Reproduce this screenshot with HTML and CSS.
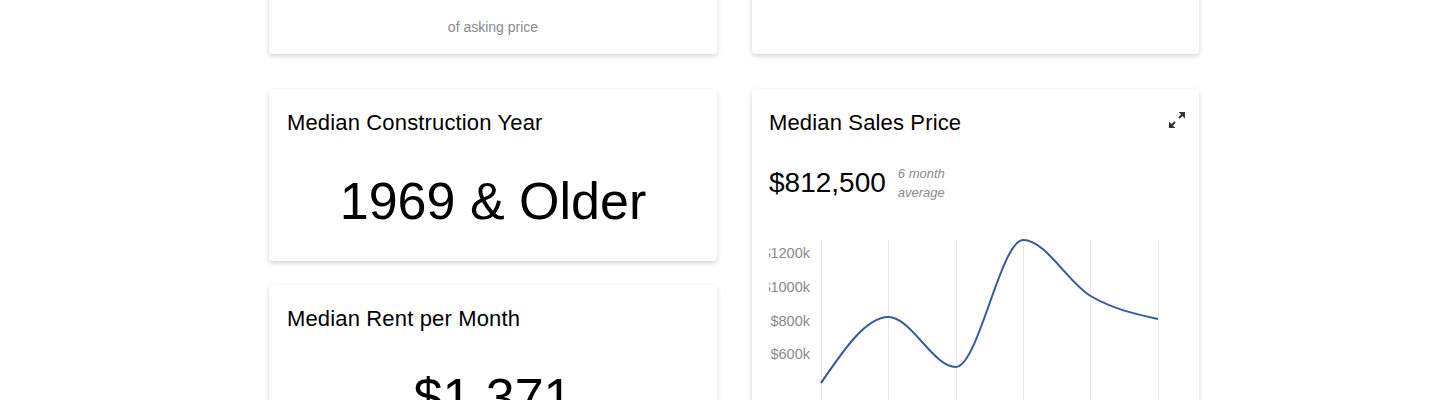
FILE: index.html
```html
<!DOCTYPE html>
<html>
<head>
    <title>Market Overview</title>
    <link rel="stylesheet" href="styles.css">
</head>
<body>
    <div class="dashboard">
        <div class="card card-top">
            <p class="card-note">of asking price</p>
        </div>
        <div class="card card-top"></div>

        <div class="stack">
            <div class="card">
                <h2 class="card-title">Median Construction Year</h2>
                <p class="card-value">1969 &amp; Older</p>
            </div>
            <div class="card">
                <h2 class="card-title">Median Rent per Month</h2>
                <p class="card-value">$1,371</p>
            </div>
        </div>

        <div class="card chart-card">
            <div class="card-head">
                <h2 class="card-title">Median Sales Price</h2>
                <svg class="expand-icon" width="16" height="16" viewBox="0 0 16 16">
                    <path d="M16 0H9.6l2.5 2.5-2.8 2.8 1.4 1.4 2.8-2.8L16 6.4z" fill="#333"/>
                    <path d="M0 16h6.4l-2.5-2.5 2.8-2.8-1.4-1.4-2.8 2.8L0 9.6z" fill="#333"/>
                </svg>
            </div>
            <div class="price-row">
                <span class="price">$812,500</span>
                <span class="price-note">6 month<br>average</span>
            </div>
            <svg class="chart" width="412" height="200" viewBox="0 0 412 200">
                <g stroke="#e8e8e8" stroke-width="1">
                    <line x1="52.5" y1="9" x2="52.5" y2="200"/>
                    <line x1="119.5" y1="9" x2="119.5" y2="200"/>
                    <line x1="187.5" y1="9" x2="187.5" y2="200"/>
                    <line x1="254.5" y1="9" x2="254.5" y2="200"/>
                    <line x1="321.5" y1="9" x2="321.5" y2="200"/>
                    <line x1="389.5" y1="9" x2="389.5" y2="200"/>
                </g>
                <g class="axis-label" text-anchor="end">
                    <text x="41" y="27">$1200k</text>
                    <text x="41" y="61">$1000k</text>
                    <text x="41" y="95">$800k</text>
                    <text x="41" y="128">$600k</text>
                </g>
                <path d="M52 152C74.5 119 96.9 86 119.4 86C141.9 86 164.3 136 186.8 136C209.3 136 231.7 9 254.2 9C276.7 9 299.1 51.8 321.6 65C344.1 78.2 366.5 83.1 389 88"
                      fill="none" stroke="#35589f" stroke-width="2"/>
            </svg>
        </div>
    </div>
</body>
</html>
```

FILE: styles.css
```css
body {
    font-family: "Liberation Sans", Arial, sans-serif;
    margin: 0;
    background-color: #ffffff;
    color: #000;
}

.dashboard {
    display: grid;
    grid-template-columns: 448px 447px;
    column-gap: 35px;
    row-gap: 35px;
    align-items: start;
    width: 930px;
    margin: -118px 0 0 269px;
}

.card {
    background-color: #ffffff;
    border-radius: 4px;
    padding: 21px 18px 19px 18px;
    box-shadow: 0 2px 5px rgba(0, 0, 0, 0.18);
}

.card-top {
    height: 172px;
    box-sizing: border-box;
    display: flex;
    flex-direction: column;
    justify-content: flex-end;
    padding-bottom: 18px;
}

.card-note {
    margin: 0;
    text-align: center;
    font-size: 14px;
    line-height: 17px;
    color: #8a8a8a;
}

.stack {
    display: flex;
    flex-direction: column;
    gap: 24px;
}

.card-title {
    margin: 0;
    font-size: 22px;
    font-weight: normal;
    line-height: 25px;
    letter-spacing: 0.15px;
}

.card-value {
    margin: 40px 0 15px 0;
    text-align: center;
    font-size: 52px;
    line-height: 1;
}

.chart-card {
    padding-right: 14px;
    padding-left: 17px;
    height: 360px;
    overflow: hidden;
}

.card-head {
    display: flex;
    justify-content: space-between;
    align-items: flex-start;
}

.expand-icon {
    margin-top: 2px;
}

.price-row {
    display: flex;
    align-items: flex-start;
    gap: 12px;
    margin-top: 29px;
}

.price {
    margin-top: 5px;
    font-size: 28px;
    line-height: 1;
}

.price-note {
    font-size: 13px;
    line-height: 19px;
    font-style: italic;
    color: #8a8a8a;
}

.chart {
    display: block;
    margin-top: 29px;
    overflow: hidden;
}

.axis-label {
    font-family: "Liberation Sans", Arial, sans-serif;
    font-size: 14.5px;
    fill: #8a8a8a;
}
```
